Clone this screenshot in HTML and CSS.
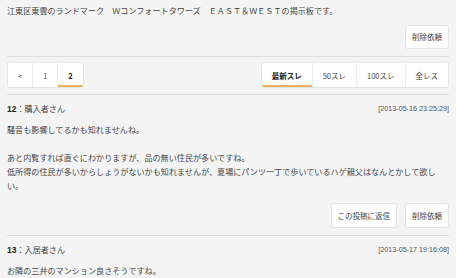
FILE: index.html
```html
<!DOCTYPE html>
<html lang="ja">
<head>
<meta charset="utf-8">
<link rel="stylesheet" href="styles.css">
</head>
<body>
<div class="page">
  <section class="intro">
    <p class="intro-text">江東区東雲のランドマーク　Ｗコンフォートタワーズ　ＥＡＳＴ＆ＷＥＳＴの掲示板です。</p>
    <div class="actions"><button class="btn">削除依頼</button></div>
  </section>
  <nav class="pager">
    <div class="seg-group">
      <a class="seg">&lt;</a>
      <a class="seg">1</a>
      <a class="seg active">2</a>
    </div>
    <div class="seg-group">
      <a class="seg active strong">最新スレ</a>
      <a class="seg">50スレ</a>
      <a class="seg">100スレ</a>
      <a class="seg">全レス</a>
    </div>
  </nav>
  <article class="post">
    <header class="post-head">
      <span class="who"><b class="num">12</b>：購入者さん</span>
      <span class="date">[2013-05-16 23:25:29]</span>
    </header>
    <div class="post-body">
      <p>騒音も影響してるかも知れませんね。</p>
      <p class="gap">あと内覧すれば直ぐにわかりますが、品の無い住民が多いですね。<br>低所得の住民が多いからしょうがないかも知れませんが、夏場にパンツ一丁で歩いているハゲ親父はなんとかして欲しい。</p>
    </div>
    <div class="actions post-actions">
      <button class="btn">この投稿に返信</button>
      <button class="btn">削除依頼</button>
    </div>
  </article>
  <article class="post last">
    <header class="post-head">
      <span class="who"><b class="num">13</b>：入居者さん</span>
      <span class="date">[2013-05-17 19:16:08]</span>
    </header>
    <div class="post-body">
      <p>お隣の三井のマンション良さそうですね。</p>
    </div>
  </article>
</div>
</body>
</html>
```

FILE: styles.css
```css
* { box-sizing: border-box; }
html, body {
  margin: 0;
  padding: 0;
  background: #f4f4f4;
}
body {
  font-family: "Noto Sans CJK JP", "Noto Sans", sans-serif;
  font-size: 8.1px;
  color: #444;
  width: 456px;
  height: 278px;
  overflow: hidden;
}
p { margin: 0; }
.page {
  padding: 0 7px;
}
.intro {
  padding-top: 3px;
  padding-bottom: 7px;
  border-bottom: 1px solid #dedede;
}
.intro-text {
  line-height: 15px;
  white-space: nowrap;
}
.actions {
  display: flex;
  justify-content: flex-end;
  gap: 8px;
  margin-top: 7px;
}
.btn {
  font-family: inherit;
  font-size: 7.5px;
  color: #444;
  background: #fff;
  border: 1px solid #e4e4e4;
  border-radius: 3px;
  height: 24px;
  padding: 0 6px;
  line-height: 1;
  cursor: pointer;
}
.post-actions .btn { height: 25px; }
.pager {
  display: flex;
  justify-content: space-between;
  padding: 5px 0 6px;
  border-bottom: 1px solid #dedede;
}
.seg-group {
  display: flex;
  background: #fff;
  border: 1px solid #e4e4e4;
  border-radius: 3px;
  height: 26px;
  overflow: hidden;
}
.seg {
  position: relative;
  display: flex;
  align-items: center;
  padding: 0 10px;
  font-size: 7.5px;
  color: #444;
  border-left: 1px solid #ececec;
}
.seg:first-child { border-left: none; }
.seg.active { color: #222; font-weight: 700; }
.seg.active::after {
  content: "";
  position: absolute;
  left: 0;
  right: 0;
  bottom: 0;
  height: 2px;
  background: #f2b35c;
}
.post {
  padding: 7px 0 7px;
  border-bottom: 1px solid #dedede;
}
.post.last { border-bottom: none; }
.post-head {
  display: flex;
  justify-content: space-between;
  align-items: center;
  line-height: 14px;
}
.num {
  color: #222;
  font-weight: 700;
  font-family: "Liberation Sans", sans-serif;
  font-size: 8.5px;
}
.date {
  font-family: "Liberation Sans", sans-serif;
  font-size: 7.2px;
  color: #555;
}
.post-body {
  margin-top: 7px;
  line-height: 14px;
}
.post-body .gap { margin-top: 14px; }
.post-actions { margin-top: 10px; }
```
